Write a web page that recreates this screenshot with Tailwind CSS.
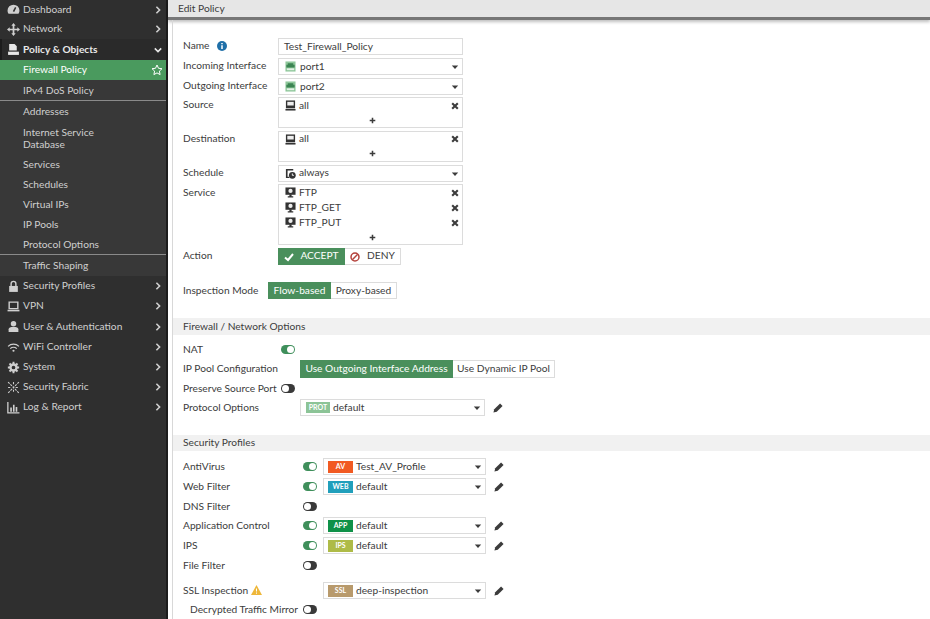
<!DOCTYPE html>
<html lang="en">
<head>
  <meta charset="UTF-8" />
  <title>Edit Policy</title>
  <script src="https://cdn.jsdelivr.net/npm/@tailwindcss/browser@4"></script>
</head>
<body class="h-[619px] w-[930px] overflow-hidden bg-white font-[Lato,sans-serif] text-[10.2px] text-[#3c3c3c]">
  <!-- shared icons -->
  <svg class="hidden">
    <symbol id="i-right" viewBox="0 0 10 10"><path d="M3 1l4 4-4 4" fill="none" stroke="currentColor" stroke-width="2"/></symbol>
    <symbol id="i-down" viewBox="0 0 10 10"><path d="M1 3l4 4 4-4" fill="none" stroke="currentColor" stroke-width="2"/></symbol>
    <symbol id="i-caret" viewBox="0 0 10 10"><path d="M1 3h8L5 7.500z" fill="currentColor"/></symbol>
    <symbol id="i-x" viewBox="0 0 10 10"><path d="M1.500 1.500l7 7M8.500 1.500l-7 7" fill="none" stroke="currentColor" stroke-width="2.600"/></symbol>
    <symbol id="i-plus" viewBox="0 0 10 10"><path d="M5 1v8M1 5h8" fill="none" stroke="currentColor" stroke-width="2.200"/></symbol>
    <symbol id="i-pencil" viewBox="0 0 12 12"><path d="M8.500 .5l3 3-7 7L.5 11.500l1-4z" fill="currentColor"/></symbol>
    <symbol id="i-port" viewBox="0 0 12 12"><path d="M.5 .5h11v11H.5z" fill="#8fc79b"/><path d="M2 8h8v2H2z" fill="#e3f1e5"/><path d="M3 2.500h6v1.500h1.500V7h-9V4H3z" fill="#3c8553"/></symbol>
    <symbol id="i-addr" viewBox="0 0 12 12"><path d="M1 .5h10v8.500H1z" fill="#333"/><path d="M2.500 2h7v4h-7z" fill="#eee"/><path d="M.5 9.700h11v1.800H.5z" fill="#333"/></symbol>
    <symbol id="i-svc" viewBox="0 0 12 12"><path d="M.5 .5h11v8H.5z" fill="#333"/><circle cx="6" cy="4.300" r="2.300" fill="#eee"/><path d="M4.800 8h2.400v2H9v1.500H3V10h1.800z" fill="#333"/></symbol>
    <symbol id="i-sched" viewBox="0 0 12 12"><path d="M1 1h8v1.800H2.800v6.700h2V11H1z" fill="#333"/><circle cx="8" cy="8" r="3.700" fill="#333"/><path d="M8 6v2h1.700" fill="none" stroke="#fff"/></symbol>
  </svg>

  <div class="flex h-full">
    <!-- sidebar -->
    <nav class="h-full w-[168px] shrink-0 border-r-2 border-[#1c1c1c] bg-[#2f2f2f] text-[#cfcfcf]">
      <a class="flex h-[19px] items-center pl-[7px] pr-[4px]">
        <svg class="mr-[3px] h-[13px] w-[13px]" viewBox="0 0 12 12"><path d="M6 1.500a5.500 5.500 0 0 0-5.500 5.500c0 1.500.5 2.500 1 3h9c.5-.5 1-1.500 1-3A5.500 5.500 0 0 0 6 1.500z" fill="currentColor"/><path d="M6 8L8 4" stroke="#2f2f2f" stroke-width="1.400"/></svg>
        <span class="flex-1">Dashboard</span><svg class="h-2 w-2"><use href="#i-right"/></svg>
      </a>
      <a class="flex h-[20px] items-center pl-[7px] pr-[4px]">
        <svg class="mr-[3px] h-[13px] w-[13px]" viewBox="0 0 12 12"><path d="M6 0l2 2.500H6.800v2.700h2.700V4L12 6 9.500 8V6.800H6.800v2.700H8L6 12 4 9.500h1.200V6.800H2.500V8L0 6l2.500-2v1.200h2.700V2.500H4z" fill="currentColor"/></svg>
        <span class="flex-1">Network</span><svg class="h-2 w-2"><use href="#i-right"/></svg>
      </a>
      <a class="flex h-[21px] items-center border-l-2 border-[#1c1c1c] bg-[#2a2a2a] pl-[5px] pr-[4px] font-bold text-[#e8e8e8]">
        <svg class="mr-[3px] h-[13px] w-[13px]" viewBox="0 0 12 12"><path d="M2 1h5l2 2v4H2z" fill="currentColor"/><path d="M1 8h10v3H1z" fill="currentColor"/></svg>
        <span class="flex-1">Policy &amp; Objects</span><svg class="h-2 w-2"><use href="#i-down"/></svg>
      </a>
      <div class="bg-[#383838]">
        <a class="flex h-[20px] items-center bg-[#4a9a5e] pl-[23px] pr-[3px] text-white">
          <span class="flex-1">Firewall Policy</span>
          <svg class="h-3 w-3" viewBox="0 0 12 12"><path d="M6 1l1.500 3.300 3.500.4-2.600 2.400.7 3.500L6 8.900l-3.100 1.700.7-3.500L1 4.700l3.500-.4z" fill="none" stroke="currentColor"/></svg>
        </a>
        <a class="flex h-[21px] items-center border-b border-[#8a8a8a] pl-[23px] pt-[1px]">IPv4 DoS Policy</a>
        <a class="flex h-[21px] items-center pl-[23px]">Addresses</a>
        <a class="block pb-[4px] pl-[23px] pt-[4px] leading-[12px]">Internet Service<br />Database</a>
        <a class="flex h-[21px] items-center pl-[23px]">Services</a>
        <a class="flex h-[20px] items-center pl-[23px]">Schedules</a>
        <a class="flex h-[20px] items-center pl-[23px]">Virtual IPs</a>
        <a class="flex h-[20px] items-center pl-[23px]">IP Pools</a>
        <a class="flex h-[20px] items-center border-b border-[#8a8a8a] pl-[23px]">Protocol Options</a>
        <a class="flex h-[21px] items-center pl-[23px]">Traffic Shaping</a>
      </div>
      <a class="flex h-[20px] items-center pl-[7px] pr-[4px]">
        <svg class="mr-[3px] h-[13px] w-[13px]" viewBox="0 0 12 12"><path d="M2 5.500h8V11H2z" fill="currentColor"/><path d="M3.800 5.500V3.500a2.200 2.200 0 0 1 4.400 0v2" fill="none" stroke="currentColor" stroke-width="1.300"/></svg>
        <span class="flex-1">Security Profiles</span><svg class="h-2 w-2"><use href="#i-right"/></svg>
      </a>
      <a class="flex h-[20px] items-center pl-[7px] pr-[4px]">
        <svg class="mr-[3px] h-[13px] w-[13px]" viewBox="0 0 12 12"><path d="M2 2h8v6H2z" fill="none" stroke="currentColor" stroke-width="1.300"/><path d="M.5 9h11v1.500H.5z" fill="currentColor"/></svg>
        <span class="flex-1">VPN</span><svg class="h-2 w-2"><use href="#i-right"/></svg>
      </a>
      <a class="flex h-[21px] items-center pl-[7px] pr-[4px]">
        <svg class="mr-[3px] h-[13px] w-[13px]" viewBox="0 0 12 12"><circle cx="6" cy="3.500" r="2.500" fill="currentColor"/><path d="M1.500 11V8.500c0-1.500 1.500-2 4.500-2s4.500.5 4.500 2V11z" fill="currentColor"/></svg>
        <span class="flex-1">User &amp; Authentication</span><svg class="h-2 w-2"><use href="#i-right"/></svg>
      </a>
      <a class="flex h-[20px] items-center pl-[7px] pr-[4px]">
        <svg class="mr-[3px] h-[13px] w-[13px]" viewBox="0 0 12 12"><path d="M1 5a7 7 0 0 1 10 0M3 7a4.300 4.300 0 0 1 6 0" fill="none" stroke="currentColor" stroke-width="1.100"/><circle cx="6" cy="9" r="1" fill="currentColor"/></svg>
        <span class="flex-1">WiFi Controller</span><svg class="h-2 w-2"><use href="#i-right"/></svg>
      </a>
      <a class="flex h-[20px] items-center pl-[7px] pr-[4px]">
        <svg class="mr-[3px] h-[13px] w-[13px]" viewBox="0 0 12 12"><circle cx="6" cy="6" r="2.800" fill="none" stroke="currentColor" stroke-width="2.200"/><path d="M6 .8v2M6 9.200v2M.8 6h2M9.200 6h2M2.300 2.300l1.400 1.400M8.300 8.300l1.400 1.400M2.300 9.700l1.400-1.400M8.300 3.700l1.400-1.400" stroke="currentColor" stroke-width="1.800"/></svg>
        <span class="flex-1">System</span><svg class="h-2 w-2"><use href="#i-right"/></svg>
      </a>
      <a class="flex h-[20px] items-center pl-[7px] pr-[4px]">
        <svg class="mr-[3px] h-[13px] w-[13px]" viewBox="0 0 12 12"><path d="M1 1l10 10M11 1L1 11M6 1v3M1 6h3M8 6h3M6 8v3" stroke="currentColor" stroke-dasharray="2 1"/></svg>
        <span class="flex-1">Security Fabric</span><svg class="h-2 w-2"><use href="#i-right"/></svg>
      </a>
      <a class="flex h-[20px] items-center pl-[7px] pr-[4px]">
        <svg class="mr-[3px] h-[13px] w-[13px]" viewBox="0 0 12 12"><path d="M.8 1v10h10.700" fill="none" stroke="currentColor" stroke-width="1.200"/><path d="M3 6h1.500v4H3zM5.500 3.500H7V10H5.500zM8 5.500h1.500V10H8z" fill="currentColor"/></svg>
        <span class="flex-1">Log &amp; Report</span><svg class="h-2 w-2"><use href="#i-right"/></svg>
      </a>
    </nav>

    <!-- main -->
    <main class="flex-1">
      <div class="flex h-[20px] items-start border-b-[3px] border-[#777] bg-[#e6e6e6] pl-[10px] leading-[16px] shadow-[0_2px_3px_rgba(0,0,0,0.25)]">Edit Policy</div>
      <div class="ml-[4px] h-[599px] border-l border-[#d8d8d8] pt-[18px]">
        <!-- policy rows -->
        <div class="pl-[10px]">
          <div class="flex h-[17px] items-center">
            <span class="flex w-[95px] items-center pb-[1px]">Name
              <svg class="ml-[8px] h-[10px] w-[10px]" viewBox="0 0 10 10"><circle cx="5" cy="5" r="5" fill="#1f6fa8"/><path d="M5 2v1.300M5 4.300V8" stroke="#fff" stroke-width="1.500"/></svg>
            </span>
            <div class="flex h-full w-[185px] items-center border border-[#dcdcdc] pl-[5px]">Test_Firewall_Policy</div>
          </div>
          <div class="mt-[3px] flex h-[17px] items-center">
            <span class="w-[95px] pb-[2px]">Incoming Interface</span>
            <div class="flex h-full w-[185px] items-center border border-[#dcdcdc] pl-[6px] pr-[3px]">
              <svg class="mr-[4px] h-[11px] w-[11px]"><use href="#i-port"/></svg><span class="flex-1">port1</span><svg class="h-2 w-2"><use href="#i-caret"/></svg>
            </div>
          </div>
          <div class="mt-[3px] flex h-[17px] items-center">
            <span class="w-[95px] pb-[2px]">Outgoing Interface</span>
            <div class="flex h-full w-[185px] items-center border border-[#dcdcdc] pl-[6px] pr-[3px]">
              <svg class="mr-[4px] h-[11px] w-[11px]"><use href="#i-port"/></svg><span class="flex-1">port2</span><svg class="h-2 w-2"><use href="#i-caret"/></svg>
            </div>
          </div>
          <div class="mt-[2px] flex h-[31px] items-start">
            <span class="w-[95px] leading-[15px]">Source</span>
            <div class="h-full w-[185px] border border-[#dcdcdc] pl-[6px] pr-[3px]">
              <div class="flex h-[15px] items-center"><svg class="mr-[3px] h-[11px] w-[11px]"><use href="#i-addr"/></svg><span class="flex-1">all</span><svg class="h-2 w-2"><use href="#i-x"/></svg></div>
              <div class="flex h-[14px] items-center justify-center"><svg class="h-[7px] w-[7px]"><use href="#i-plus"/></svg></div>
            </div>
          </div>
          <div class="mt-[3px] flex h-[31px] items-start">
            <span class="w-[95px] leading-[14px]">Destination</span>
            <div class="h-full w-[185px] border border-[#dcdcdc] pl-[6px] pr-[3px]">
              <div class="flex h-[14px] items-center"><svg class="mr-[3px] h-[11px] w-[11px]"><use href="#i-addr"/></svg><span class="flex-1">all</span><svg class="h-2 w-2"><use href="#i-x"/></svg></div>
              <div class="flex h-[15px] items-center justify-center"><svg class="h-[7px] w-[7px]"><use href="#i-plus"/></svg></div>
            </div>
          </div>
          <div class="mt-[3px] flex h-[17px] items-center">
            <span class="w-[95px] pb-[2px]">Schedule</span>
            <div class="flex h-full w-[185px] items-center border border-[#dcdcdc] pl-[6px] pr-[3px]">
              <svg class="mr-[3px] h-[11px] w-[11px]"><use href="#i-sched"/></svg><span class="flex-1 pb-[2px]">always</span><svg class="h-2 w-2"><use href="#i-caret"/></svg>
            </div>
          </div>
          <div class="mt-[2px] flex h-[61px] items-start">
            <span class="w-[95px] leading-[16px]">Service</span>
            <div class="h-full w-[185px] border border-[#dcdcdc] pl-[6px] pr-[3px]">
              <div class="flex h-[15px] items-center"><svg class="mr-[3px] h-[11px] w-[11px]"><use href="#i-svc"/></svg><span class="flex-1">FTP</span><svg class="h-2 w-2"><use href="#i-x"/></svg></div>
              <div class="flex h-[15px] items-center"><svg class="mr-[3px] h-[11px] w-[11px]"><use href="#i-svc"/></svg><span class="flex-1">FTP_GET</span><svg class="h-2 w-2"><use href="#i-x"/></svg></div>
              <div class="flex h-[15px] items-center"><svg class="mr-[3px] h-[11px] w-[11px]"><use href="#i-svc"/></svg><span class="flex-1">FTP_PUT</span><svg class="h-2 w-2"><use href="#i-x"/></svg></div>
              <div class="flex h-[14px] items-center justify-center"><svg class="h-[7px] w-[7px]"><use href="#i-plus"/></svg></div>
            </div>
          </div>
          <div class="mt-[3px] flex h-[17px] items-center">
            <span class="w-[95px] pb-[2px]">Action</span>
            <div class="flex h-full">
              <span class="flex w-[67px] items-center justify-center bg-[#4a8f5c] text-white">
                <svg class="mr-[6px] h-[10px] w-[10px]" viewBox="0 0 10 10"><path d="M1 5.500l3 2.500 5-6" fill="none" stroke="currentColor" stroke-width="2"/></svg><span class="pb-[1px]">ACCEPT</span>
              </span>
              <span class="flex w-[56px] items-center justify-center border border-l-0 border-[#dcdcdc]">
                <svg class="mr-[7px] h-[10px] w-[10px]" viewBox="0 0 10 10"><circle cx="5" cy="5" r="4" fill="none" stroke="#b5443e" stroke-width="1.500"/><path d="M2.300 7.700l5.400-5.400" stroke="#b5443e" stroke-width="1.500"/></svg><span class="pb-[1px]">DENY</span>
              </span>
            </div>
          </div>
          <div class="mt-[17px] flex h-[17px] items-center">
            <span class="w-[85px]">Inspection Mode</span>
            <div class="flex h-full">
              <span class="flex w-[63px] items-center justify-center bg-[#4a8f5c] text-white">Flow-based</span>
              <span class="flex w-[66px] items-center justify-center border border-l-0 border-[#dcdcdc]">Proxy-based</span>
            </div>
          </div>
        </div>

        <!-- firewall options -->
        <div class="mt-[19px] flex h-[17px] items-center bg-[#f1f1f1] pl-[10px]">Firewall / Network Options</div>
        <div class="pl-[10px]">
          <div class="mt-[6px] flex h-[17px] items-center">
            <span class="w-[98px]">NAT</span>
            <span class="flex h-[9px] w-[14px] items-center justify-end rounded-full bg-[#3f8f5b] pr-[1px]"><span class="h-[7px] w-[7px] rounded-full bg-white"></span></span>
          </div>
          <div class="mt-[2px] flex h-[18px] items-center">
            <span class="w-[117px]">IP Pool Configuration</span>
            <div class="flex h-full">
              <span class="flex w-[153px] items-center justify-center whitespace-nowrap bg-[#4a8f5c] text-white">Use Outgoing Interface Address</span>
              <span class="flex w-[102px] items-center justify-center whitespace-nowrap border border-l-0 border-[#dcdcdc]">Use Dynamic IP Pool</span>
            </div>
          </div>
          <div class="mt-[2px] flex h-[17px] items-center">
            <span class="w-[98px] whitespace-nowrap">Preserve Source Port</span>
            <span class="flex h-[9px] w-[14px] items-center justify-start rounded-full bg-[#3a3a3a] pl-[1px]"><span class="h-[7px] w-[7px] rounded-full bg-white"></span></span>
          </div>
          <div class="mt-[2px] flex h-[17px] items-center">
            <span class="w-[117px]">Protocol Options</span>
            <div class="flex h-full w-[185px] items-center border border-[#dcdcdc] pl-[5px] pr-[3px]">
              <span class="mr-[3px] flex h-[11px] w-[24px] items-center justify-center bg-[#8cc497] text-[7px] font-bold text-white">PROT</span>
              <span class="flex-1">default</span><svg class="h-2 w-2"><use href="#i-caret"/></svg>
            </div>
            <svg class="ml-[8px] h-[10px] w-[10px]"><use href="#i-pencil"/></svg>
          </div>
        </div>

        <!-- security profiles -->
        <div class="mt-[19px] flex h-[16px] items-center bg-[#f1f1f1] pl-[10px]">Security Profiles</div>
        <div class="pl-[10px]">
          <div class="mt-[7px] flex h-[17px] items-center">
            <span class="w-[120px]">AntiVirus</span>
            <span class="mr-[6px] flex h-[9px] w-[14px] items-center justify-end rounded-full bg-[#3f8f5b] pr-[1px]"><span class="h-[7px] w-[7px] rounded-full bg-white"></span></span>
            <div class="flex h-full w-[163px] items-center border border-[#dcdcdc] pl-[4px] pr-[3px]">
              <span class="mr-[3px] flex h-[12px] w-[25px] items-center justify-center bg-[#f15a22] text-[7px] font-bold text-white">AV</span>
              <span class="flex-1">Test_AV_Profile</span><svg class="h-2 w-2"><use href="#i-caret"/></svg>
            </div>
            <svg class="ml-[8px] h-[10px] w-[10px]"><use href="#i-pencil"/></svg>
          </div>
          <div class="mt-[3px] flex h-[17px] items-center">
            <span class="w-[120px]">Web Filter</span>
            <span class="mr-[6px] flex h-[9px] w-[14px] items-center justify-end rounded-full bg-[#3f8f5b] pr-[1px]"><span class="h-[7px] w-[7px] rounded-full bg-white"></span></span>
            <div class="flex h-full w-[163px] items-center border border-[#dcdcdc] pl-[4px] pr-[3px]">
              <span class="mr-[3px] flex h-[12px] w-[25px] items-center justify-center bg-[#219fbb] text-[7px] font-bold text-white">WEB</span>
              <span class="flex-1">default</span><svg class="h-2 w-2"><use href="#i-caret"/></svg>
            </div>
            <svg class="ml-[8px] h-[10px] w-[10px]"><use href="#i-pencil"/></svg>
          </div>
          <div class="mt-[3px] flex h-[17px] items-center">
            <span class="w-[120px]">DNS Filter</span>
            <span class="flex h-[9px] w-[14px] items-center justify-start rounded-full bg-[#3a3a3a] pl-[1px]"><span class="h-[7px] w-[7px] rounded-full bg-white"></span></span>
          </div>
          <div class="mt-[2px] flex h-[17px] items-center">
            <span class="w-[120px]">Application Control</span>
            <span class="mr-[6px] flex h-[9px] w-[14px] items-center justify-end rounded-full bg-[#3f8f5b] pr-[1px]"><span class="h-[7px] w-[7px] rounded-full bg-white"></span></span>
            <div class="flex h-full w-[163px] items-center border border-[#dcdcdc] pl-[4px] pr-[3px]">
              <span class="mr-[3px] flex h-[12px] w-[25px] items-center justify-center bg-[#0f9148] text-[7px] font-bold text-white">APP</span>
              <span class="flex-1">default</span><svg class="h-2 w-2"><use href="#i-caret"/></svg>
            </div>
            <svg class="ml-[8px] h-[10px] w-[10px]"><use href="#i-pencil"/></svg>
          </div>
          <div class="mt-[3px] flex h-[17px] items-center">
            <span class="w-[120px]">IPS</span>
            <span class="mr-[6px] flex h-[9px] w-[14px] items-center justify-end rounded-full bg-[#3f8f5b] pr-[1px]"><span class="h-[7px] w-[7px] rounded-full bg-white"></span></span>
            <div class="flex h-full w-[163px] items-center border border-[#dcdcdc] pl-[4px] pr-[3px]">
              <span class="mr-[3px] flex h-[12px] w-[25px] items-center justify-center bg-[#aebb47] text-[7px] font-bold text-white">IPS</span>
              <span class="flex-1">default</span><svg class="h-2 w-2"><use href="#i-caret"/></svg>
            </div>
            <svg class="ml-[8px] h-[10px] w-[10px]"><use href="#i-pencil"/></svg>
          </div>
          <div class="mt-[3px] flex h-[17px] items-center">
            <span class="w-[120px]">File Filter</span>
            <span class="flex h-[9px] w-[14px] items-center justify-start rounded-full bg-[#3a3a3a] pl-[1px]"><span class="h-[7px] w-[7px] rounded-full bg-white"></span></span>
          </div>
          <div class="mt-[8px] flex h-[17px] items-center">
            <span class="flex w-[140px] items-center">SSL Inspection
              <svg class="ml-[3px] h-[10px] w-[11px]" viewBox="0 0 11 10"><path d="M5.500 0L11 10H0z" fill="#eeb73a"/><path d="M5.500 3.500v3M5.500 7.500v1.200" stroke="#fff"/></svg>
            </span>
            <div class="flex h-full w-[163px] items-center border border-[#dcdcdc] pl-[4px] pr-[3px]">
              <span class="mr-[3px] flex h-[12px] w-[25px] items-center justify-center bg-[#b89a6c] text-[7px] font-bold text-white">SSL</span>
              <span class="flex-1">deep-inspection</span><svg class="h-2 w-2"><use href="#i-caret"/></svg>
            </div>
            <svg class="ml-[8px] h-[10px] w-[10px]"><use href="#i-pencil"/></svg>
          </div>
          <div class="mt-[2px] flex h-[17px] items-center">
            <span class="w-[120px] whitespace-nowrap pl-[7px]">Decrypted Traffic Mirror</span>
            <span class="flex h-[9px] w-[14px] items-center justify-start rounded-full bg-[#3a3a3a] pl-[1px]"><span class="h-[7px] w-[7px] rounded-full bg-white"></span></span>
          </div>
        </div>
      </div>
    </main>
  </div>
</body>
</html>
